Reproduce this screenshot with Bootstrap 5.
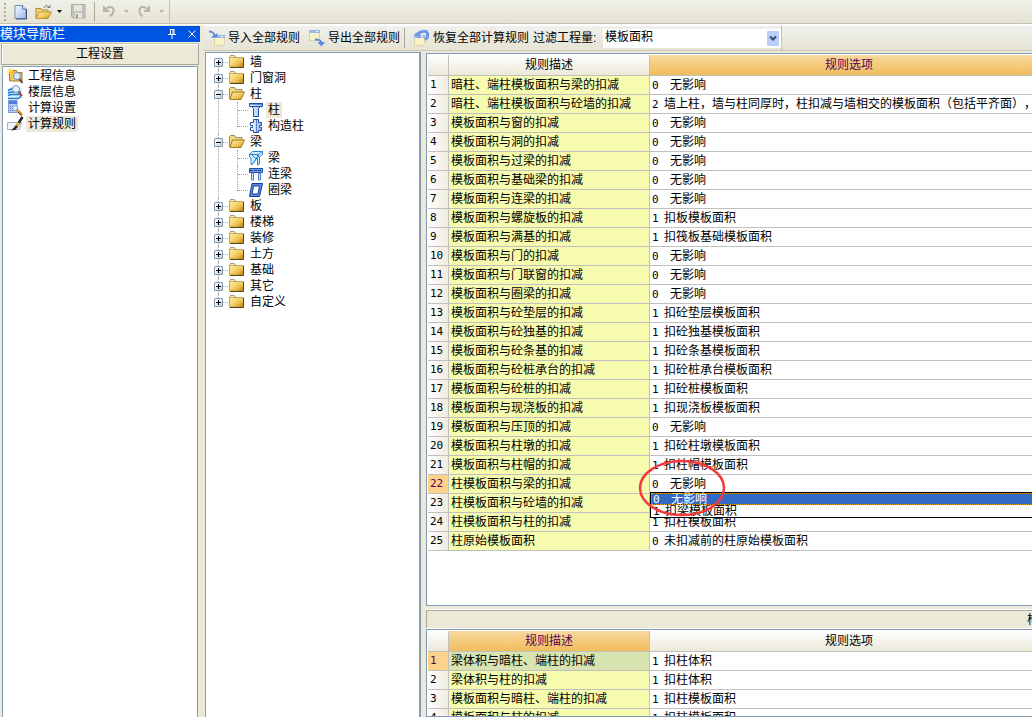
<!DOCTYPE html>
<html lang="zh-CN">
<head>
<meta charset="utf-8">
<meta name="viewport" content="width=device-width, initial-scale=1">
<title>计算规则</title>
<link href="https://cdn.jsdelivr.net/npm/bootstrap@5.3.0/dist/css/bootstrap.min.css" rel="stylesheet">
<style>
:root { --face:#ece9d8; --edge:#7f9db9; --line:#c0c0c0; --shade:#aca899; }
body { font:12px/16px "Liberation Sans","Noto Sans CJK SC",sans-serif; color:#000; background:var(--face); text-spacing-trim:space-all; font-kerning:none; }
button, select { font:inherit; color:inherit; }
svg { display:block; flex:none; }
.tool { border:0; background:none; padding:0; }
.tool:disabled { color:#b7b5aa; }
.drop { padding:0 1px; }
.topbar { height:25px; background:linear-gradient(#f1f0e9,#e6e4d4 90%); border-bottom:1px solid #fff; box-shadow:inset 0 -1px #c5c2b0; }
.topbar .strip { width:170px; height:23px; border-right:1px solid #c5c2b0; }
.grip { width:2px; height:18px; background:repeating-linear-gradient(#b3ae98 0 2px,transparent 2px 4px); }
.vsep { width:1px; height:20px; background:var(--shade); }
.navpane { width:200px; }
.navtitle { height:16px; margin-top:1px; background:#0054e3; color:#fff; font-size:13px; }
.navhead { height:22px; margin:1px 1px 0; background:var(--face); border:1px solid var(--shade); border-top-color:#c9c5b5; box-shadow:inset 1px 1px #fff; padding:0; line-height:20px; }
.pane { background:#fff; border:1px solid var(--edge); }
.navlist { margin:1px 2px 0; padding:1px 0 0 4px; border-bottom:0; }
.navlist a, .tree a { color:#000; text-decoration:none; white-space:nowrap; }
.navlist a { height:16px; gap:2px; }
.navlist span, .tree a span { padding:0 2px; }
.active-item { background:var(--face); }
.work { margin-left:4px; }
.rulebar { height:26px; background:linear-gradient(#f0f0ed,#e6e4d3); border-bottom:1px solid #cac7b6; border-top:1px solid #fff; }
.rulebar .strip { width:578px; height:24px; border-right:1px solid #c5c2b0; padding-left:4px; }
.rulebar .tool { white-space:nowrap; gap:2px; }
.filter { width:178px; height:19px; border:0; border-radius:0; background:#fff; appearance:none; padding:0 2px 2px; outline:0; line-height:16px; }
.filterarrow { position:absolute; right:2px; top:2px; pointer-events:none; }
.treepane { width:216px; margin:1px 0 0 1px; border-bottom:0; border-right:2px solid #8b9cab; padding:1px 0 0 8px; }
.tree, .tree ul { list-style:none; margin:0; padding:0; }
.tree li { position:relative; }
.tree a { height:16px; gap:3px; padding-left:15px; }
.tree > li::before { content:""; position:absolute; left:4px; top:0; bottom:0; border-left:1px dotted #aca899; }
.tree > li:first-child::before { top:8px; }
.tree > li:last-child::before { bottom:8px; }
.tree > li::after { content:""; position:absolute; left:9px; top:8px; width:5px; border-top:1px dotted #aca899; }
.tree ul li::before { content:""; position:absolute; left:23px; top:0; bottom:0; border-left:1px dotted #aca899; }
.tree ul li:last-child::before { bottom:7px; }
.tree ul li::after { content:""; position:absolute; left:24px; top:8px; width:10px; border-top:1px dotted #aca899; }
.tree ul a { padding-left:34px; gap:2px; }
.twist { position:absolute; left:0; top:4px; z-index:1; width:9px; height:9px; padding:0; border:1px solid #7b9ab8; border-radius:1px; background:linear-gradient(135deg,#fff,#d2cdbf); }
.twist::before, .twist.shut::after { content:""; position:absolute; left:1px; top:3px; width:5px; height:1px; background:#000; }
.twist.shut::after { left:3px; top:1px; width:1px; height:5px; }
.right { margin:2px 0 0 5px; min-width:0; }
.gridpane { border-right:0; padding:1px 0 0 1px; overflow:hidden; }
.main-rules { height:553px; flex:none; }
.caption-bar { height:18px; margin:4px 0 1px; background:var(--face); border-top:1px solid var(--shade); border-left:1px solid var(--shade); box-shadow:0 -1px #fff, 0 1px #fff; }
.caption-bar span { width:5px; white-space:nowrap; overflow:hidden; }
.sheet { table-layout:fixed; border-collapse:separate; border-spacing:0; width:calc(100% + 17px); }
.sheet th, .sheet td { height:19px; padding:0 0 0 2px; line-height:16px; font-weight:400; white-space:nowrap; vertical-align:middle; border:solid var(--line); border-width:0 1px 1px 0; }
.sheet thead th { height:21px; text-align:center; padding:0; background:linear-gradient(#fff,#ece9d8); }
.sheet thead th.hot { background:linear-gradient(#f9d99f,#f0bd5c); color:#5b0058; }
.sheet tbody th { background:linear-gradient(90deg,#fff,#efecdf); }
.sheet tbody th.hot { background:#ffd28c; color:#5b0058; }
.sheet .desc { background:#f7fbae; }
.sheet .desc.hot { background:#d8e4b0; }
.sheet .digits { font-family:"DejaVu Sans Mono",monospace; font-size:11px; line-height:12px; }
.code { display:inline-block; width:12px; }
.code.wide { width:18px; }
.picker { position:absolute; z-index:2; left:0; right:0; top:17px; list-style:none; margin:0; padding:0; background:#fff; border:1px solid #000; }
.picker li { height:12px; line-height:12px; padding-left:2px; }
.picker li[aria-selected=true] { background:#316ac5; color:#fff; outline:1px dotted #e3a11c; outline-offset:-1px; }
.ring { position:absolute; z-index:3; left:-12px; top:-17px; pointer-events:none; }
</style>
</head>
<body class="vh-100 overflow-hidden d-flex flex-column">
<svg width="0" height="0" class="position-absolute" aria-hidden="true">
<defs>
<linearGradient id="gold" x2="1" y2="1"><stop stop-color="#fff3b0"/><stop offset=".6" stop-color="#f0c555"/><stop offset="1" stop-color="#b77600"/></linearGradient>
<linearGradient id="sky" x2="1" y2="1"><stop stop-color="#f5f9ff"/><stop offset="1" stop-color="#9fb9e6"/></linearGradient>
<linearGradient id="steel" x2="1"><stop stop-color="#fff"/><stop offset="1" stop-color="#8fb4ee"/></linearGradient>
<symbol id="folder" viewBox="0 0 16 16"><path d="M.5 3.500V2.500L1.500 1.500h4l1.500 2" fill="#f7e6a0" stroke="#a89a78"/><path d="M.5 3.500h14V13H.5z" fill="url(#gold)" stroke="#c0a564"/><path d="M14.500 4v9.500H1" fill="none" stroke="#5d4308"/></symbol>
<symbol id="folder-open" viewBox="0 0 16 16"><path d="M.5 13V2.500l1-1h4l1.500 2h6V6" fill="#f5d680" stroke="#a08a58"/><path d="M3.500 6H15.500L12 13.500H1z" fill="url(#gold)" stroke="#a37a25"/></symbol>
<symbol id="caret" viewBox="0 0 5 3"><path d="M0 0h5L2.500 3z" fill="currentColor"/></symbol>
<symbol id="note" viewBox="0 0 16 16"><path d="M4.500 4.500h10v8l-2 2h-8z" fill="#f8f3c6" stroke="#d9d3a6"/><path d="M4 4h11v3H4z" fill="#9db8ee"/><path d="M11 5.500h2" stroke="#fff"/></symbol>
</defs>
</svg>

<header class="topbar flex-shrink-0">
<div class="strip d-flex align-items-center position-relative">
<span class="grip ms-1"></span>
<button class="tool ms-2" aria-label="新建"><svg width="13" height="16" viewBox="0 0 13 16"><path d="M1 1.500h7.500l3.500 3.500v9.500H1z" fill="url(#sky)" stroke="#7791bd"/><path d="M8.500 1.500V5H12" fill="#dce8fb" stroke="#5874a8"/><path d="M12.500 5v10H2" fill="none" stroke="#3a4f7c"/></svg></button>
<button class="tool ms-2" aria-label="打开"><svg width="17" height="16" viewBox="0 0 17 16"><path d="M1 14V4.500h5l1 1.500h6v2" fill="#f3d37e" stroke="#ad8737"/><path d="M4 8h12.500L13 14.500H1z" fill="url(#gold)" stroke="#c0933a"/><path d="M9 4c1-3 4-3 5.500 0M12.500 3.500h2.500V1" fill="none" stroke="#65758e"/></svg></button>
<button class="tool drop ms-1" aria-label="打开列表"><svg width="5" height="3"><use href="#caret"/></svg></button>
<button class="tool ms-2" aria-label="保存" disabled><svg width="15" height="15" viewBox="0 0 15 15"><path d="M.5.500h13.500V14H2L.5 12.500z" fill="#c3c2ba" stroke="#adaca4"/><path d="M3 1h8v6H3zM4 9h7v5H4z" fill="#e8e7df"/><path d="M5 10h2v4H5z" fill="#9e9d96"/></svg></button>
<span class="vsep ms-2"></span>
<button class="tool ms-2" aria-label="撤销" disabled><svg width="12" height="13" viewBox="0 0 12 13"><path d="M1 1v5h5M1.500 5.500C5 1 10 1 10.500 5c.3 3-1.500 5-4 6.500" fill="none" stroke="currentColor" stroke-width="2"/></svg></button>
<button class="tool drop ms-2" aria-label="撤销列表" disabled><svg width="5" height="3"><use href="#caret"/></svg></button>
<button class="tool ms-2" aria-label="重做" disabled><svg width="12" height="13" viewBox="0 0 12 13"><path d="M11 1v5H6M10.500 5.500C7 1 2 1 1.500 5c-.3 3 1 5 3 6.500" fill="none" stroke="currentColor" stroke-width="2"/></svg></button>
<button class="tool drop ms-2" aria-label="重做列表" disabled><svg width="5" height="3"><use href="#caret"/></svg></button>
</div>
</header>

<div class="d-flex flex-grow-1 overflow-hidden">
<aside class="navpane d-flex flex-column flex-shrink-0">
<div class="navtitle d-flex align-items-center">
<span class="me-auto">模块导航栏</span>
<button class="tool me-2" aria-label="固定"><svg width="8" height="10" viewBox="0 0 8 10"><path d="M2 .5h4M2.500 0v5M5 0v5M6 0v5M0 5.500h8M4 6v4" fill="none" stroke="#fff"/></svg></button>
<button class="tool ms-1 me-1" aria-label="关闭"><svg width="8" height="8" viewBox="0 0 8 8"><path d="M.5.500l7 7M7.500.500l-7 7" stroke="#fff"/></svg></button>
</div>
<button class="navhead">工程设置</button>
<nav class="pane navlist flex-grow-1">
<a href="#" class="d-flex align-items-center"><svg width="17" height="16" viewBox="0 0 17 16"><path d="M2.500 4.500h3l1-2h3l1 2H15V13H2.500z" fill="#f1c964" stroke="#a07b32"/><path d="M4 0v8M0 4h8M1 1l6 6M7 1L1 7" stroke="#ffc21a"/><circle cx="10" cy="8" r="3.500" fill="#d9eafa" stroke="#7a90b0"/><path d="M12.500 11l3 4" stroke="#604026" stroke-width="2"/></svg><span>工程信息</span></a>
<a href="#" class="d-flex align-items-center"><svg width="17" height="16" viewBox="0 0 17 16"><path d="M1 5l4-2h8l2 2v9l-2 1H1z" fill="#d8edff"/><path d="M1 6.500l4-2h8M1 9l3-1h10M1 11.500l3-1h10M1 14.500h10l3-2" fill="none" stroke="#217bcc" stroke-width="1.500"/><circle cx="9" cy="5" r="3.500" fill="#e2f0ff" stroke="#8798b6"/><path d="M11.500 8l3.500 4" stroke="#925330" stroke-width="2"/></svg><span>楼层信息</span></a>
<a href="#" class="d-flex align-items-center"><svg width="17" height="16" viewBox="0 0 17 16"><path d="M1.500.500H10v12H1.500z" fill="#b9ccf5" stroke="#809ace"/><path d="M2 1h8v3H2z" fill="#527bdf"/><path d="M3 6.500h6M3 8.500h6M3 10.500h5" stroke="#4a69b9" stroke-dasharray="1 1"/><circle cx="8" cy="8" r="2.500" fill="#e2efff" stroke="#84a5d5"/><path d="M10 10l5 5" stroke="#d99a37" stroke-width="3"/><path d="M11 12l3.500 3.500" stroke="#633"/></svg><span>计算设置</span></a>
<a href="#" class="d-flex align-items-center" aria-current="page"><svg width="17" height="16" viewBox="0 0 17 16"><path d="M.5 6.500h14l-2 7H.5z" fill="#eff3fb" stroke="#a3afc3"/><path d="M15.500 1L11 8" stroke="#252525" stroke-width="2.500"/><path d="M12 7L9 11" stroke="#d9b13d" stroke-width="3"/><path d="M9 9l2 2-3 3-4 .5 2-2z" fill="#332816"/></svg><span class="active-item">计算规则</span></a>
</nav>
</aside>

<main class="work d-flex flex-column flex-grow-1 overflow-hidden">
<div class="rulebar flex-shrink-0">
<div class="strip d-flex align-items-center">
<button class="tool d-flex align-items-center"><svg width="18" height="18" viewBox="0 0 18 18"><g transform="translate(2 2)"><use href="#note" width="16" height="16"/></g><path d="M1 2.500c4 0 5.500 1.500 5.500 6" fill="none" stroke="#5e8bdf" stroke-width="2"/><path d="M2.500 8.500h7V4z" fill="#5e8bdf"/></svg><span>导入全部规则</span></button>
<button class="tool d-flex align-items-center ms-2"><svg width="18" height="18" viewBox="0 0 18 18"><g transform="translate(-3 -3)"><use href="#note" width="16" height="16"/></g><path d="M7 10.500c5 0 6.500 1 6.500 5" fill="none" stroke="#5e8bdf" stroke-width="2"/><path d="M9.500 13h7.500l-3.500 4.500z" fill="#5e8bdf"/></svg><span>导出全部规则</span></button>
<span class="vsep mx-1"></span>
<button class="tool d-flex align-items-center ms-1"><svg width="18" height="18" viewBox="0 0 18 18"><g transform="translate(-3 2)"><use href="#note" width="16" height="16"/></g><path d="M5 5.500c3-4 9-4 9.500-1 .5 3-.5 5-2.500 6" fill="none" stroke="#6e98e4" stroke-width="3"/><path d="M1 5.500l6-4v8z" fill="#6e98e4"/></svg><span>恢复全部计算规则</span></button>
<label for="qty" class="ms-1 text-nowrap">过滤工程量:</label>
<div class="position-relative ms-auto">
<select id="qty" class="filter d-block"><option>模板面积</option></select>
<svg class="filterarrow" width="12" height="15" viewBox="0 0 12 15"><rect width="12" height="15" rx="1" fill="#b9cdfb"/><path d="M3 5.500l3 3 3-3" fill="none" stroke="#35486e" stroke-width="2"/></svg>
</div>
</div>
</div>

<div class="d-flex flex-grow-1 overflow-hidden">
<nav class="pane treepane flex-shrink-0" aria-label="构件">
<ul class="tree" id="tree"></ul>
</nav>
<section class="right d-flex flex-column flex-grow-1">
<div class="pane gridpane main-rules">
<table class="sheet">
<colgroup><col style="width:21px"><col style="width:201px"><col></colgroup>
<thead><tr><th></th><th scope="col">规则描述</th><th scope="col" class="hot">规则选项</th></tr></thead>
<tbody id="rules"></tbody>
</table>
</div>
<div class="caption-bar d-flex align-items-center justify-content-end flex-shrink-0"><span>构件规则</span></div>
<div class="pane gridpane flex-grow-1">
<table class="sheet">
<colgroup><col style="width:21px"><col style="width:201px"><col></colgroup>
<thead><tr><th></th><th scope="col" class="hot">规则描述</th><th scope="col">规则选项</th></tr></thead>
<tbody id="related"></tbody>
</table>
</div>
</section>
</div>
</main>
</div>

<script src="https://cdn.jsdelivr.net/npm/bootstrap@5.3.0/dist/js/bootstrap.bundle.min.js"></script>
<script>
const icons = {
  column: '<path d="M1.500 1.500h13v3h-2l-2 2v8h-5v-8l-2-2h-2z" fill="url(#steel)" stroke="#1b4fae"/><path d="M1 2h14M3 4.500h10" stroke="#1b4fae"/>',
  tie: '<path d="M5.500 1.500h5v3h3v3h-2v2h2v3h-3v2h-5v-2h-3v-3h2v-2h-2v-3h3z" fill="url(#steel)" stroke="#1b4fae"/><path d="M8.500 2v12" stroke="#5c82c5"/>',
  beam: '<path d="M1.500 4l3-2.500h10v3L11.500 7v7l-2 1V7l-5 7.500H3V8L1.500 7z" fill="#d5ecff" stroke="#2587d2"/><path d="M2 4.500h9l3-3M4 5l4 4M8 4l3 3M5 13l6-8" fill="none" stroke="#2587d2"/>',
  link: '<path d="M1.500 2.500h13v4h-13z" fill="#6e9ee2" stroke="#1b4fae"/><path d="M2 4.500h12" stroke="#17408e" stroke-dasharray="3 1"/><path d="M3.500 7h2v7h-2zM10.500 7h2v7h-2z" fill="#cfe1fb" stroke="#4f7fce"/>',
  ring: '<path d="M4 1.500h10.500l-3 13H1.500z" fill="#5c8be0" stroke="#143f9c"/><path d="M5.500 4h6l-1.500 8H4z" fill="#fff" stroke="#143f9c"/>'
};
const tree = [
  ['墙'], ['门窗洞'], ['柱', [['柱', 'column'], ['构造柱', 'tie']]],
  ['梁', [['梁', 'beam'], ['连梁', 'link'], ['圈梁', 'ring']]],
  ['板'], ['楼梯'], ['装修'], ['土方'], ['基础'], ['其它'], ['自定义']
];
document.getElementById('tree').innerHTML = tree.map(([name, kids]) =>
  `<li><button class="twist ${kids ? '' : 'shut'}" aria-label="${name}"></button>
  <a href="#" class="d-flex align-items-center"><svg width="16" height="16"><use href="#folder${kids ? '-open' : ''}"/></svg><span>${name}</span></a>` +
  (kids ? '<ul>' + kids.map(([kid, icon]) =>
    `<li><a href="#" class="d-flex align-items-center"><svg width="16" height="16" viewBox="0 0 16 16">${icons[icon]}</svg><span class="${icon === 'column' ? 'active-item' : ''}">${kid}</span></a></li>`).join('') + '</ul>' : '') + '</li>').join('');

const none = '0|无影响';
const rules = [
  ['暗柱、端柱模板面积与梁的扣减', none],
  ['暗柱、端柱模板面积与砼墙的扣减', '2|墙上柱，墙与柱同厚时，柱扣减与墙相交的模板面积（包括平齐面），'],
  ['模板面积与窗的扣减', none], ['模板面积与洞的扣减', none], ['模板面积与过梁的扣减', none],
  ['模板面积与基础梁的扣减', none], ['模板面积与连梁的扣减', none],
  ['模板面积与螺旋板的扣减', '1|扣板模板面积'], ['模板面积与满基的扣减', '1|扣筏板基础模板面积'],
  ['模板面积与门的扣减', none], ['模板面积与门联窗的扣减', none], ['模板面积与圈梁的扣减', none],
  ['模板面积与砼垫层的扣减', '1|扣砼垫层模板面积'], ['模板面积与砼独基的扣减', '1|扣砼独基模板面积'],
  ['模板面积与砼条基的扣减', '1|扣砼条基模板面积'], ['模板面积与砼桩承台的扣减', '1|扣砼桩承台模板面积'],
  ['模板面积与砼桩的扣减', '1|扣砼桩模板面积'], ['模板面积与现浇板的扣减', '1|扣现浇板模板面积'],
  ['模板面积与压顶的扣减', none], ['模板面积与柱墩的扣减', '1|扣砼柱墩模板面积'],
  ['模板面积与柱帽的扣减', '1|扣柱帽模板面积'], ['柱模板面积与梁的扣减', none],
  ['柱模板面积与砼墙的扣减', ''], ['柱模板面积与柱的扣减', '1|扣柱模板面积'],
  ['柱原始模板面积', '0|未扣减前的柱原始模板面积']
];
const related = [
  ['梁体积与暗柱、端柱的扣减', '1|扣柱体积'], ['梁体积与柱的扣减', '1|扣柱体积'],
  ['模板面积与暗柱、端柱的扣减', '1|扣柱模板面积'], ['模板面积与柱的扣减', '1|扣柱模板面积']
];
const choice = value => {
  if (!value) return '';
  const [code, text] = value.split('|');
  return `<span class="digits code ${value === none ? 'wide' : ''}">${code}</span>${text}`;
};
const picker = `<ul class="picker" role="listbox" aria-label="规则选项"><li role="option" aria-selected="true">${choice(none)}</li><li role="option" aria-selected="false">${choice('1|扣梁模板面积')}</li></ul>
  <svg class="ring" width="88" height="60" viewBox="0 0 88 60"><ellipse cx="44" cy="30" rx="42" ry="27" fill="none" stroke="#f5383b" stroke-width="2.500"/></svg>`;
const fill = (id, rows, current, hotDesc) => {
  document.getElementById(id).innerHTML = rows.map(([desc, value], i) => {
    const hot = i + 1 === current;
    return `<tr><th scope="row" class="digits ${hot ? 'hot' : ''}">${i + 1}</th><td class="desc ${hot && hotDesc ? 'hot' : ''}">${desc}</td><td${hot && !hotDesc ? ' class="position-relative"' : ''}>${choice(value)}${hot && !hotDesc ? picker : ''}</td></tr>`;
  }).join('');
};
fill('rules', rules, 22, false);
fill('related', related, 1, true);
</script>
</body>
</html>
